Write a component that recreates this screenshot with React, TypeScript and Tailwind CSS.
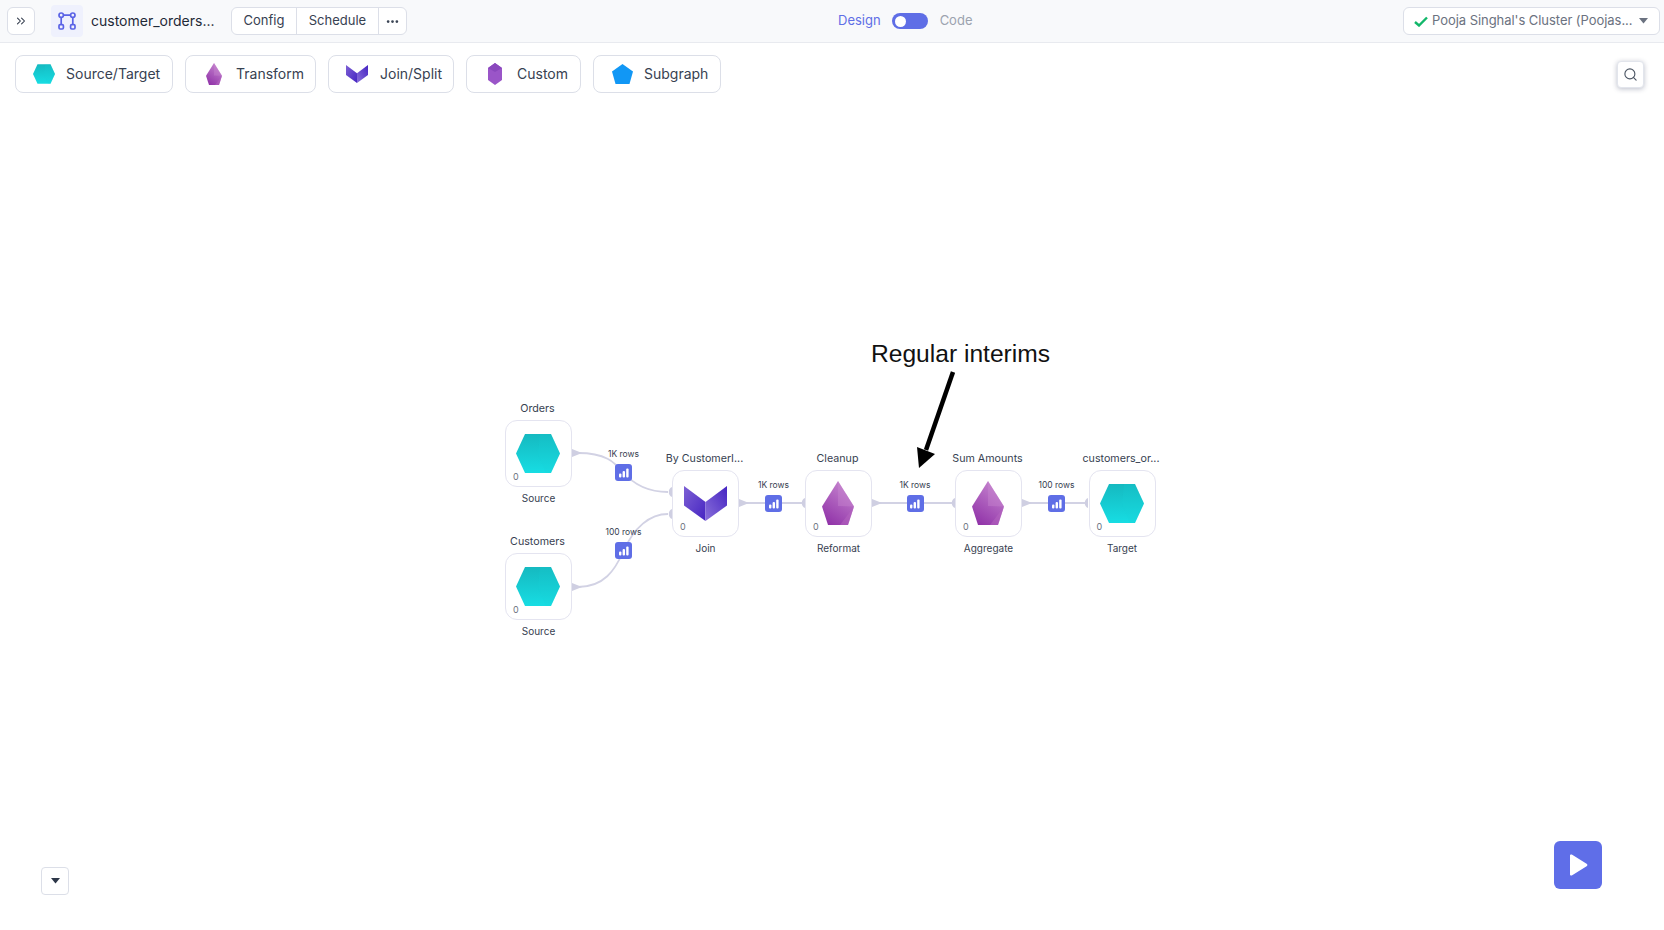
import { ChevronsRight, Ellipsis, Search } from "lucide-react";

const font = { fontFamily: "Inter, sans-serif" };

function Hexagon({ w, h, id }: { w: number; h: number; id: string }) {
  return (
    <svg width={w} height={h} viewBox="0 0 44 39">
      <defs>
        <linearGradient id={id} x1="0" y1="0" x2="0" y2="1">
          <stop offset="0" stopColor="#15b9c0" />
          <stop offset="1" stopColor="#17dde3" />
        </linearGradient>
      </defs>
      <polygon points="9,0 35,0 44,19.5 35,39 9,39 0,19.5" fill={`url(#${id})`} />
      <polygon points="24,0 35,0 44,19.5 35,39 30,39 22,20" fill="#19d0d6" opacity="0.2" />
    </svg>
  );
}

function Gem({ w, h, id }: { w: number; h: number; id: string }) {
  return (
    <svg width={w} height={h} viewBox="0 0 32 44">
      <defs>
        <linearGradient id={id} x1="0.7" y1="0" x2="0.2" y2="1">
          <stop offset="0" stopColor="#c685cf" />
          <stop offset="1" stopColor="#9032a8" />
        </linearGradient>
      </defs>
      <polygon points="16,0 32,25.5 26,44 6,44 0,25.5" fill={`url(#${id})`} />
      <polygon points="16,0 32,25.5 16,25" fill="#c988cf" opacity="0.4" />
      <polygon points="32,25.5 26,44 18,44" fill="#b566c0" opacity="0.5" />
    </svg>
  );
}

function JoinIcon({ w, h, id }: { w: number; h: number; id: string }) {
  return (
    <svg width={w} height={h} viewBox="0 0 43 35">
      <defs>
        <linearGradient id={`${id}l`} x1="0" y1="0" x2="1" y2="1">
          <stop offset="0" stopColor="#7d60d4" />
          <stop offset="1" stopColor="#4524c2" />
        </linearGradient>
        <linearGradient id={`${id}r`} x1="1" y1="0" x2="0" y2="1">
          <stop offset="0" stopColor="#4524c2" />
          <stop offset="1" stopColor="#8a70da" />
        </linearGradient>
      </defs>
      <polygon points="0,0 21.5,16 21.5,35 0,19.5" fill={`url(#${id}l)`} />
      <polygon points="43,0 21.5,16 21.5,35 43,19.5" fill={`url(#${id}r)`} />
    </svg>
  );
}

function CustomIcon() {
  return (
    <svg width="14" height="22" viewBox="0 0 14 22">
      <polygon points="7,0 14,5 14,17 7,22 0,17 0,5" fill="#9a55c8" />
      <polygon points="7,0 14,5 7,9 0,5" fill="#8a48bd" />
    </svg>
  );
}

function SubgraphIcon() {
  return (
    <svg width="21" height="20" viewBox="0 0 21 20">
      <polygon points="10.5,0 21,7.5 17.5,20 3.5,20 0,7.5" fill="#1197f5" />
    </svg>
  );
}

function Bars() {
  return (
    <svg width="10" height="10" viewBox="0 0 10 10" fill="#fff">
      <rect x="0" y="5.5" width="2.4" height="4" rx="1" />
      <rect x="3.6" y="3" width="2.4" height="6.5" rx="1" />
      <rect x="7.2" y="0.5" width="2.4" height="9" rx="1" />
    </svg>
  );
}

const tools = [
  { label: "Source/Target", icon: <Hexagon w={22} h={20} id="t1" />, cls: "w-[158px] pl-[17px] gap-[11px]" },
  { label: "Transform", icon: <Gem w={16} h={22} id="t2" />, cls: "w-[131px] pl-[20px] gap-[14px]" },
  { label: "Join/Split", icon: <JoinIcon w={22} h={18} id="t3" />, cls: "w-[126px] pl-[17px] gap-[12px]" },
  { label: "Custom", icon: <CustomIcon />, cls: "w-[115px] pl-[21px] gap-[15px]" },
  { label: "Subgraph", icon: <SubgraphIcon />, cls: "w-[128px] pl-[18px] gap-[11px]" },
];

const nodes = [
  { pos: "left-[505px] top-[320px]", top: "Orders", bottom: "Source", icon: <Hexagon w={44} h={39} id="n1" /> },
  { pos: "left-[505px] top-[453px]", top: "Customers", bottom: "Source", icon: <Hexagon w={44} h={39} id="n2" /> },
  { pos: "left-[672px] top-[370px]", top: "By CustomerI...", bottom: "Join", icon: <JoinIcon w={43} h={35} id="n3" /> },
  { pos: "left-[805px] top-[370px]", top: "Cleanup", bottom: "Reformat", icon: <Gem w={32} h={44} id="n4" /> },
  { pos: "left-[955px] top-[370px]", top: "Sum Amounts", bottom: "Aggregate", icon: <Gem w={32} h={44} id="n5" /> },
  { pos: "left-[1088.5px] top-[370px]", top: "customers_or...", bottom: "Target", icon: <Hexagon w={44} h={39} id="n6" /> },
];

const interims = [
  { pos: "left-[615px] top-[364px]", label: "1K rows" },
  { pos: "left-[615px] top-[442px]", label: "100 rows" },
  { pos: "left-[765px] top-[395px]", label: "1K rows" },
  { pos: "left-[906.5px] top-[395px]", label: "1K rows" },
  { pos: "left-[1048px] top-[395px]", label: "100 rows" },
];

function Edges() {
  const outs = [
    [572, 453],
    [572, 587],
    [739, 503],
    [872, 503],
    [1022, 503],
  ];
  const ins = [
    [672, 492],
    [672, 514],
    [805, 503],
    [955, 503],
    [1088, 503],
  ];
  return (
    <svg className="absolute left-0 top-[-100px]" width="1664" height="930" fill="none">
      <g stroke="#d2d2e4" strokeWidth="1.8">
        <path d="M578 453 C606 453 614 462 623 472 C634 485 650 492 668 492" />
        <path d="M578 587 C604 587 615 570 623 552 C634 527 650 514 668 514" />
        <path d="M744 503 H805" />
        <path d="M877 503 H955" />
        <path d="M1027 503 H1088" />
      </g>
      <g fill="#cfcfe2">
        {outs.map(([x, y]) => (
          <polygon key={`${x}-${y}`} points={`${x},${y - 4} ${x + 10},${y} ${x},${y + 4}`} />
        ))}
        {ins.map(([x, y]) => (
          <path key={`${x}-${y}`} d={`M${x} ${y - 5} A5.5 5.5 0 0 0 ${x} ${y + 5} Z`} />
        ))}
      </g>
      <line x1="953" y1="372" x2="926" y2="450" stroke="#000" strokeWidth="4.5" />
      <polygon points="917,447 935,454 919,468" fill="#000" />
    </svg>
  );
}

export default function App() {
  return (
    <div className="flex flex-col h-[930px] w-[1664px] overflow-hidden bg-white" style={font}>
      <header className="flex items-center h-[43px] shrink-0 bg-[#f8f9fb] border-b border-[#e8eaef] pl-[7px] pr-[4px]">
        <button className="flex items-center justify-center w-[28px] h-[28px] bg-white border border-[#dcdfe8] rounded-md text-[#2d3748]">
          <ChevronsRight size={14} strokeWidth={1.8} />
        </button>
        <div className="flex items-center justify-center w-[32px] h-[32px] ml-[16px] bg-[#eff1fd] rounded">
          <svg width="18" height="18" viewBox="0 0 18 18" fill="none" stroke="#5a63e6" strokeWidth="1.7">
            <circle cx="3.2" cy="3.2" r="2.2" />
            <circle cx="14.8" cy="3.2" r="2.2" />
            <rect x="1" y="12.6" width="4.4" height="4.4" rx="1.2" />
            <rect x="12.6" y="12.6" width="4.4" height="4.4" rx="1.2" />
            <path d="M5.4 3.2H12.6M3.2 5.4V12.6M14.8 5.4V12.6" />
          </svg>
        </div>
        <span className="ml-[8px] mb-[1px] w-[122px] text-[14px] text-[#1f2937] whitespace-nowrap">customer_orders...</span>
        <div className="flex items-center h-[28px] ml-[18px] bg-white border border-[#dcdfe8] rounded-md text-[13px] text-[#374151]">
          <span className="flex items-center justify-center w-[65px] h-full border-r border-[#dcdfe8]">Config</span>
          <span className="flex items-center justify-center w-[82px] h-full border-r border-[#dcdfe8]">Schedule</span>
          <span className="flex items-center justify-center w-[27px] h-full">
            <Ellipsis size={15} strokeWidth={2.4} />
          </span>
        </div>
        <div className="flex items-center ml-[431px] text-[13px]">
          <span className="text-[#5f6ee6]">Design</span>
          <span className="flex items-center justify-start w-[36px] h-[16px] ml-[11px] pl-[3px] rounded-full bg-[#5f6ee6]">
            <span className="w-[11px] h-[11px] rounded-full bg-white" />
          </span>
          <span className="ml-[12px] text-[#9ca3af]">Code</span>
        </div>
        <button className="flex items-center w-[257px] h-[28px] ml-auto pl-[10px] bg-white border border-[#dcdfe8] rounded-md text-[13px] tracking-[-0.05px] text-[#6b7280] whitespace-nowrap">
          <svg width="14" height="11" viewBox="0 0 14 11" fill="none" stroke="#12b76a" strokeWidth="2.4">
            <path d="M1 6 L5 9.5 L13 1.5" />
          </svg>
          <span className="ml-[4px]">Pooja Singhal's Cluster (Poojas...</span>
          <svg className="ml-[7px]" width="9" height="6" viewBox="0 0 9 6" fill="#6b7280">
            <polygon points="0,0 9,0 4.5,5.5" />
          </svg>
        </button>
      </header>

      <div className="flex items-center h-[57px] shrink-0 pt-[4px] pl-[15px] pr-[20px] gap-[12px]">
        {tools.map((t) => (
          <div
            key={t.label}
            className={`flex items-center h-[38px] ${t.cls} bg-white border border-[#dcdfe8] rounded-lg text-[14px] text-[#374151]`}
          >
            {t.icon}
            <span>{t.label}</span>
          </div>
        ))}
        <button className="flex items-center justify-center w-[27px] h-[27px] ml-auto mt-[1px] bg-white border border-[#e2e5ec] rounded shadow-[0_1px_5px_rgba(30,40,80,0.3)] text-[#4b5563]">
          <Search size={15} strokeWidth={1.8} />
        </button>
      </div>

      <main className="relative flex-1">
        <Edges />
        <span
          className="absolute left-[871px] top-[239px] text-[24.6px] leading-[30px] text-[#111] whitespace-nowrap"
          style={{ fontFamily: "'Liberation Sans', Arial, sans-serif" }}
        >
          Regular interims
        </span>
        {nodes.map((n) => (
          <div
            key={n.pos}
            className={`absolute ${n.pos} flex items-center justify-center w-[67px] h-[67px] pr-[1px] pb-[1px] bg-white border border-[#e4e4f0] rounded-xl`}
          >
            <span className="absolute left-1/2 -translate-x-1/2 ml-[-1px] top-[-19px] text-[10.7px] leading-[14px] text-[#374151] whitespace-nowrap">
              {n.top}
            </span>
            {n.icon}
            <span className="absolute left-[7px] bottom-[4px] text-[9px] leading-[10px] text-[#6b7280]">0</span>
            <span className="absolute left-1/2 -translate-x-1/2 top-[70px] text-[10px] leading-[14px] text-[#374151] whitespace-nowrap">
              {n.bottom}
            </span>
          </div>
        ))}
        {interims.map((c) => (
          <div key={c.pos} className={`absolute ${c.pos} flex items-center justify-center w-[17px] h-[17px] bg-[#5f6ee6] rounded-[3px]`}>
            <span className="absolute left-1/2 -translate-x-1/2 top-[-16px] text-[8.5px] leading-[12px] text-[#374151] whitespace-nowrap">
              {c.label}
            </span>
            <Bars />
          </div>
        ))}
        <button className="absolute left-[41px] top-[767px] flex items-center justify-center w-[28px] h-[28px] bg-white border border-[#dcdfe8] rounded">
          <svg width="9" height="6" viewBox="0 0 9 6" fill="#2d3748">
            <polygon points="0,0 9,0 4.5,5.5" />
          </svg>
        </button>
        <button className="absolute left-[1554px] top-[741px] flex items-center justify-center w-[48px] h-[48px] bg-[#5f6ee8] rounded-md">
          <svg width="20" height="22" viewBox="0 0 20 22" fill="#fff">
            <path d="M2 1.5 C2 0.6 3 0.2 3.8 0.6 L18.6 9.7 C19.6 10.3 19.6 11.7 18.6 12.3 L3.8 21.4 C3 21.8 2 21.4 2 20.5 Z" />
          </svg>
        </button>
      </main>
    </div>
  );
}
